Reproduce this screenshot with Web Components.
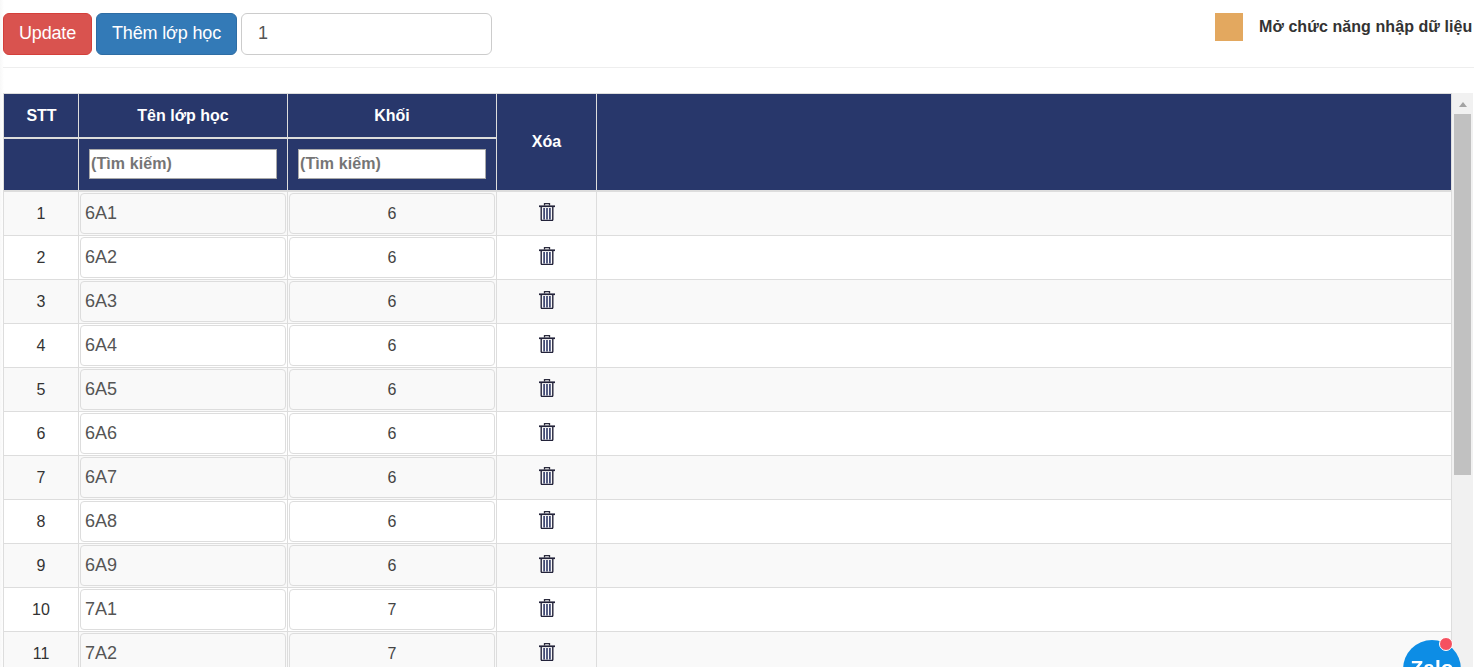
<!DOCTYPE html>
<html lang="vi">
<head>
<meta charset="utf-8">
<title>Lớp học</title>
<style>
  html, body { margin: 0; height: 100%; overflow: hidden; background: #fff; }
  body { font-family: "Liberation Sans", Arial, sans-serif; font-size: 16px; color: #333; }
</style>
</head>
<body>
<class-page></class-page>

<script>
const trashIcon = `
  <svg width="16" height="18" viewBox="0 0 16 18" aria-hidden="true">
    <path d="M5.5 2.5V.7h5v1.8" fill="none" stroke="#2a2a3c" stroke-width="1.3"/>
    <path d="M0 2.4h16v1.7H0z" fill="#23233a"/>
    <path d="M2.2 4v12.6c0 .5.4.9.9.9h9.8c.5 0 .9-.4.9-.9V4" fill="none" stroke="#23233a" stroke-width="1.4"/>
    <path d="M5.1 5v11.4M8 5v11.4M10.9 5v11.4" fill="none" stroke="#2f3866" stroke-width="1.6"/>
  </svg>`;

class ToolBar extends HTMLElement {
  constructor() {
    super();
    const root = this.attachShadow({ mode: 'open' });
    root.innerHTML = `
      <style>
        :host { display: flex; align-items: flex-start; box-sizing: border-box; height: 68px; margin-left: 3px; padding-top: 13px; border-bottom: 1px solid #eee; }
        button { box-sizing: border-box; height: 42px; margin: 0 4px 0 0; padding: 0 0 2px; font: 18px "Liberation Sans", Arial, sans-serif; letter-spacing: -.15px; color: #fff; border: 1px solid; border-radius: 6px; white-space: nowrap; }
        .red { background: #d9534f; border-color: #d43f3a; width: 89px; }
        .blue { background: #337ab7; border-color: #2e6da4; width: 141px; }
        input { box-sizing: border-box; width: 251px; height: 42px; padding: 0 16px 2px; font: 18px "Liberation Sans", Arial, sans-serif; color: #555; background: #fff; border: 1px solid #ccc; border-radius: 6px; outline: 0; }
        .toggle { display: flex; margin-left: auto; gap: 16px; white-space: nowrap; width: 259px; overflow: hidden; }
        .box { flex: none; width: 28px; height: 28px; background: #e3a85f; }
        .label { font-size: 16px; font-weight: bold; letter-spacing: .08px; color: #333; line-height: 27px; }
      </style>
      <button class="red">Update</button>
      <button class="blue">Thêm lớp học</button>
      <input value="1">
      <div class="toggle"><span class="box"></span><span class="label">Mở chức năng nhập dữ liệu</span></div>`;
  }
}

class ClassHead extends HTMLElement {
  constructor() {
    super();
    const root = this.attachShadow({ mode: 'open' });
    root.innerHTML = `
      <style>
        :host { display: grid; grid-template-columns: 75px 209px 209px 100px 1fr; grid-template-rows: 45px 51px; background: #28376b; border-top: 1px solid #ddd; border-bottom: 2px solid #ddd; color: #fff; font-weight: bold; font-size: 16px; }
        div { display: flex; align-items: center; justify-content: center; box-sizing: border-box; border-right: 1px solid #ddd; }
        .top { grid-row: 1; border-bottom: 2px solid #ddd; }
        .span { grid-row: 1 / 3; }
        .bottom { grid-row: 2; padding: 0 10px 2px 10px; }
        input { box-sizing: border-box; width: 100%; height: 30px; padding: 1px; font: bold 16px "Liberation Sans", Arial, sans-serif; letter-spacing: .1px; background: #fff; border: 1px solid #a9a9a9; outline: 0; }
        input::placeholder { color: #757575; opacity: 1; }
      </style>
      <div class="top" style="grid-column:1;padding-left:1px">STT</div>
      <div class="top" style="grid-column:2">Tên lớp học</div>
      <div class="top" style="grid-column:3">Khối</div>
      <div class="span" style="grid-column:4">Xóa</div>
      <div class="span" style="grid-column:5;border-right:0"></div>
      <div class="bottom" style="grid-column:1"></div>
      <div class="bottom" style="grid-column:2"><input placeholder="(Tìm kiếm)"></div>
      <div class="bottom" style="grid-column:3"><input placeholder="(Tìm kiếm)"></div>`;
  }
}

class ClassRow extends HTMLElement {
  connectedCallback() {
    if (this.shadowRoot) return;
    const root = this.attachShadow({ mode: 'open' });
    const stt = this.getAttribute('stt');
    const name = this.getAttribute('name');
    const grade = this.getAttribute('grade');
    root.innerHTML = `
      <style>
        :host { display: grid; grid-template-columns: 75px 209px 209px 100px 1fr; height: 44px; box-sizing: border-box; border-bottom: 1px solid #ddd; font-size: 16px; color: #333; }
        :host([odd]) { background: #f9f9f9; }
        .cell { display: flex; align-items: center; justify-content: center; box-sizing: border-box; border-right: 1px solid #ddd; }
        .field { padding: 1px; align-items: stretch; }
        input { box-sizing: border-box; width: 100%; min-width: 0; height: 41px; padding: 0 4px; font: 18px "Liberation Sans", Arial, sans-serif; color: #555; background: transparent; border: 1px solid #ddd; border-radius: 4px; outline: 0; }
        .grade { font-size: 16px; text-align: center; color: #444; }
        svg { display: block; margin-top: -3px; }
      </style>
      <div class="cell">${stt}</div>
      <div class="cell field"><input value="${name}"></div>
      <div class="cell field"><input class="grade" value="${grade}"></div>
      <div class="cell">${trashIcon}</div>
      <div class="cell" style="border-right:0"></div>`;
  }
}

class ClassTable extends HTMLElement {
  constructor() {
    super();
    const root = this.attachShadow({ mode: 'open' });
    root.innerHTML = `
      <style>
        :host { display: flex; height: 574px; margin-top: 25px; padding-left: 3px; overflow: hidden; }
        .grid { flex: none; width: 1447px; border-left: 1px solid #ddd; border-right: 1px solid #ddd; }
        .bar { flex: none; display: flex; flex-direction: column; align-items: center; width: 21px; background: #f1f1f1; }
        .up { width: 0; height: 0; margin: 9px 0 7px; border: 4px solid transparent; border-top: 0; border-bottom: 5px solid #a3a3a3; }
        .thumb { width: 17px; height: 361px; background: #c1c1c1; }
      </style>
      <div class="grid"><class-head></class-head><slot></slot></div>
      <div class="bar"><span class="up"></span><span class="thumb"></span></div>`;
    const names = ['6A1', '6A2', '6A3', '6A4', '6A5', '6A6', '6A7', '6A8', '6A9', '7A1', '7A2'];
    names.forEach((name, i) => {
      const row = document.createElement('class-row');
      row.setAttribute('stt', i + 1);
      row.setAttribute('name', name);
      row.setAttribute('grade', name[0]);
      if (i % 2 === 0) row.setAttribute('odd', '');
      this.appendChild(row);
    });
  }
}

class ZaloBadge extends HTMLElement {
  constructor() {
    super();
    const root = this.attachShadow({ mode: 'open' });
    root.innerHTML = `
      <style>
        :host { position: fixed; left: 1403px; top: 640px; width: 58px; height: 58px; border-radius: 50%; background: #0d8de5; color: #fff; font-weight: bold; font-size: 21px; text-align: center; line-height: 1; }
        span { display: block; padding-top: 17px; }
        i { position: absolute; left: 36px; top: -3px; width: 12px; height: 12px; border-radius: 50%; background: #f5515f; border: 1px solid #fff; }
      </style>
      <span>Zalo</span><i></i>`;
  }
}

class ClassPage extends HTMLElement {
  constructor() {
    super();
    const root = this.attachShadow({ mode: 'open' });
    root.innerHTML = `
      <style>
        :host { display: block; height: 667px; overflow: hidden; background: linear-gradient(90deg, #f8f8f8, #fff 4px); }
      </style>
      <tool-bar></tool-bar>
      <class-table></class-table>
      <zalo-badge></zalo-badge>`;
  }
}

customElements.define('tool-bar', ToolBar);
customElements.define('class-head', ClassHead);
customElements.define('class-row', ClassRow);
customElements.define('class-table', ClassTable);
customElements.define('zalo-badge', ZaloBadge);
customElements.define('class-page', ClassPage);
</script>
</body>
</html>
